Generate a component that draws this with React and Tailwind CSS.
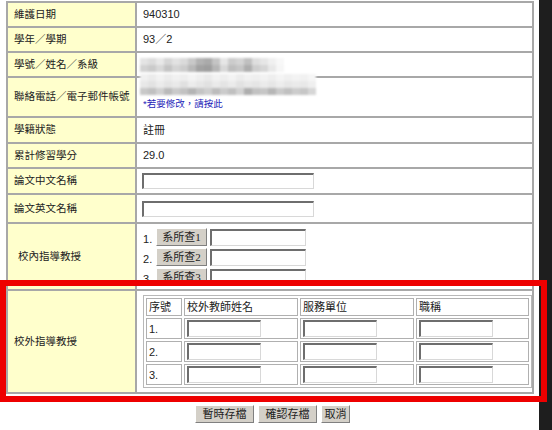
const FONT = { fontFamily: '"Liberation Sans", "Noto Sans CJK TC", sans-serif' };

const labelCell =
  "border border-[#a8a8a8] bg-[#ffffcc] pl-[6px] align-middle text-left font-normal text-[10.5px] text-[#222]";
const valueCell =
  "border border-[#a8a8a8] bg-white pl-[6px] align-middle text-[11px] text-[#222]";

const inputCls =
  "block bg-white border-t-2 border-l-2 border-r border-b border-t-[#6e6e6e] border-l-[#6e6e6e] border-r-[#d8d8d8] border-b-[#d8d8d8]";

const btnCls =
  "flex items-center justify-center bg-[#d4d0c8] border border-t-white border-l-white border-r-[#808080] border-b-[#808080] text-[11px] text-[#222] leading-none";

// grey mosaic used to hide personal data
const row3Blur = [
  ["#e4e4e4", "#dcdcdc", "#e8e8e8", "#d6d6d6", "#e2e2e2", "#dadada", "#c8c8c8", "#b2b2b2", "#aaaaaa", "#c4c4c4", "#e6e6e6", "#cccccc", "#d4d4d4", "#c0c0c0", "#dedede", "#e6e6e6", "#f0f0f0", "#f8f8f8"],
  ["#d2d2d2", "#cacaca", "#d8d8d8", "#c4c4c4", "#d4d4d4", "#cccccc", "#b8b8b8", "#a2a2a2", "#9e9e9e", "#b6b6b6", "#d8d8d8", "#bebebe", "#c6c6c6", "#aeaeae", "#cecece", "#d6d6d6", "#e8e8e8", "#f6f6f6"],
];
const row4Blur = [
  ["#f0f0f0", "#ebebeb", "#f2f2f2", "#ececec", "#f1f1f1", "#eeeeee", "#f4f4f4", "#efefef", "#eaeaea", "#f2f2f2", "#eeeeee", "#f3f3f3", "#ececec", "#f1f1f1", "#efefef", "#f2f2f2", "#eeeeee", "#f4f4f4", "#f0f0f0", "#f3f3f3", "#f1f1f1", "#f6f6f6"],
  ["#e8e8e8", "#e2e2e2", "#ebebeb", "#e4e4e4", "#e9e9e9", "#e0e0e0", "#ececec", "#e6e6e6", "#e1e1e1", "#eaeaea", "#e4e4e4", "#ebebeb", "#e2e2e2", "#e8e8e8", "#e5e5e5", "#ebebeb", "#e6e6e6", "#ededed", "#e7e7e7", "#eaeaea", "#e8e8e8", "#efefef"],
  ["#c8c8c8", "#c0c0c0", "#d0d0d0", "#bababa", "#cacaca", "#c2c2c2", "#b4b4b4", "#c4c4c4", "#cecece", "#bcbcbc", "#cbcbcb", "#c0c0c0", "#d2d2d2", "#aeaeae", "#c2c2c2", "#c6c6c6", "#b6b6b6", "#cacaca", "#c0c0c0", "#cccccc", "#c6c6c6", "#d6d6d6"],
];

const Mosaic = ({ rows, cell = 8, h = 7, className = "" }) => (
  <div className={`blur-[0.8px] ${className}`}>
    {rows.map((r, i) => (
      <div key={i} className="flex">
        {r.map((c, j) => (
          <div key={j} style={{ background: c, width: cell, height: h }} />
        ))}
      </div>
    ))}
  </div>
);

const Row = ({ h, label, children, valueCls = "" }) => (
  <tr className={h}>
    <td className={`${labelCell} w-[132px]`}>{label}</td>
    <td className={`${valueCell} ${valueCls}`}>{children}</td>
  </tr>
);

const InnerProf = () => (
  <table className="border-separate border-spacing-[2px] border border-[#b8b8b8] w-[389px] text-[11px] text-[#222]">
    <thead>
      <tr className="h-[18px]">
        <th className="border border-[#b0b0b0] font-normal text-left pl-[2px] w-[36px]">序號</th>
        <th className="border border-[#b0b0b0] font-normal text-left pl-[2px] w-[114px]">校外教師姓名</th>
        <th className="border border-[#b0b0b0] font-normal text-left pl-[2px] w-[114px]">服務單位</th>
        <th className="border border-[#b0b0b0] font-normal text-left pl-[2px]">職稱</th>
      </tr>
    </thead>
    <tbody>
      {["1.", "2.", "3."].map((n) => (
        <tr key={n} className="h-[21px]">
          <td className="border border-[#b0b0b0] pl-[2px]">{n}</td>
          {[0, 1, 2].map((k) => (
            <td key={k} className="border border-[#b0b0b0] pl-[2px]">
              <input type="text" className={`${inputCls} w-[74px] h-[17px]`} />
            </td>
          ))}
        </tr>
      ))}
    </tbody>
  </table>
);

export default function App() {
  return (
    <div className="relative w-[552px] h-[430px] overflow-hidden bg-white flex" style={FONT}>
      <div className="w-[539px] pt-[1px] pl-[6px] flex flex-col">
        <table className="border-separate border-spacing-0 border border-[#a8a8a8] w-[528px]">
          <tbody>
            <Row h="h-[25px]" label="維護日期">940310</Row>
            <Row h="h-[25px]" label="學年／學期">93／2</Row>
            <Row h="h-[25px]" label="學號／姓名／系級">
              <Mosaic rows={row3Blur} className="mt-[1px] -ml-[3px]" />
            </Row>
            <Row h="h-[40px]" label="聯絡電話／電子郵件帳號" valueCls="align-top">
              <div className="flex flex-col">
                <Mosaic rows={row4Blur} className="-mt-[4px] -ml-[3px]" />
                <span className="mt-[4px] text-[9.5px] text-[#2323b8] leading-none">*若要修改，請按此</span>
              </div>
            </Row>
            <Row h="h-[26px]" label="學籍狀態">註冊</Row>
            <Row h="h-[25px]" label="累計修習學分">29.0</Row>
            <Row h="h-[26px]" label="論文中文名稱">
              <input type="text" className={`${inputCls} w-[172px] h-[16px] -ml-[1px]`} />
            </Row>
            <Row h="h-[29px]" label="論文英文名稱">
              <input type="text" className={`${inputCls} w-[172px] h-[16px] -ml-[1px]`} />
            </Row>
            <tr className="h-[67px]">
              <td className={`${labelCell} w-[132px] pl-[10px]`}>校內指導教授</td>
              <td className={`${valueCell} align-top pt-[4px] pl-[4px]`}>
                <div className="flex flex-col gap-[2px]">
                  {[1, 2, 3].map((n) => (
                    <div key={n} className="flex items-end">
                      <span className="w-[13px] text-[11px] leading-none pb-[1px]">{n}.</span>
                      <button
                        type="button"
                        className={`${btnCls} w-[51px] h-[18px]`}
                        style={{ fontFamily: '"Liberation Serif", "Noto Sans CJK TC", serif' }}
                      >
                        系所查{n}
                      </button>
                      <input type="text" className={`${inputCls} ml-[3px] w-[96px] h-[17px]`} />
                    </div>
                  ))}
                </div>
              </td>
            </tr>
            <tr className="h-[103px]">
              <td className={`${labelCell} w-[132px]`}>校外指導教授</td>
              <td className={`${valueCell} pl-[2px]`}>
                <InnerProf />
              </td>
            </tr>
          </tbody>
        </table>

        <div className="flex justify-center gap-[4px] mt-[11px]">
          <button type="button" className={`${btnCls} w-[59px] h-[18px]`}>暫時存檔</button>
          <button type="button" className={`${btnCls} w-[59px] h-[18px]`}>確認存檔</button>
          <button type="button" className={`${btnCls} w-[29px] h-[18px]`}>取消</button>
        </div>
      </div>
      <div className="flex-1 bg-[#1e1e1e]" />

      {/* red highlight frame */}
      <div className="absolute left-0 top-[280px] w-[547px] h-[122px] border-[6px] border-[#ee0000] pointer-events-none" />
    </div>
  );
}
